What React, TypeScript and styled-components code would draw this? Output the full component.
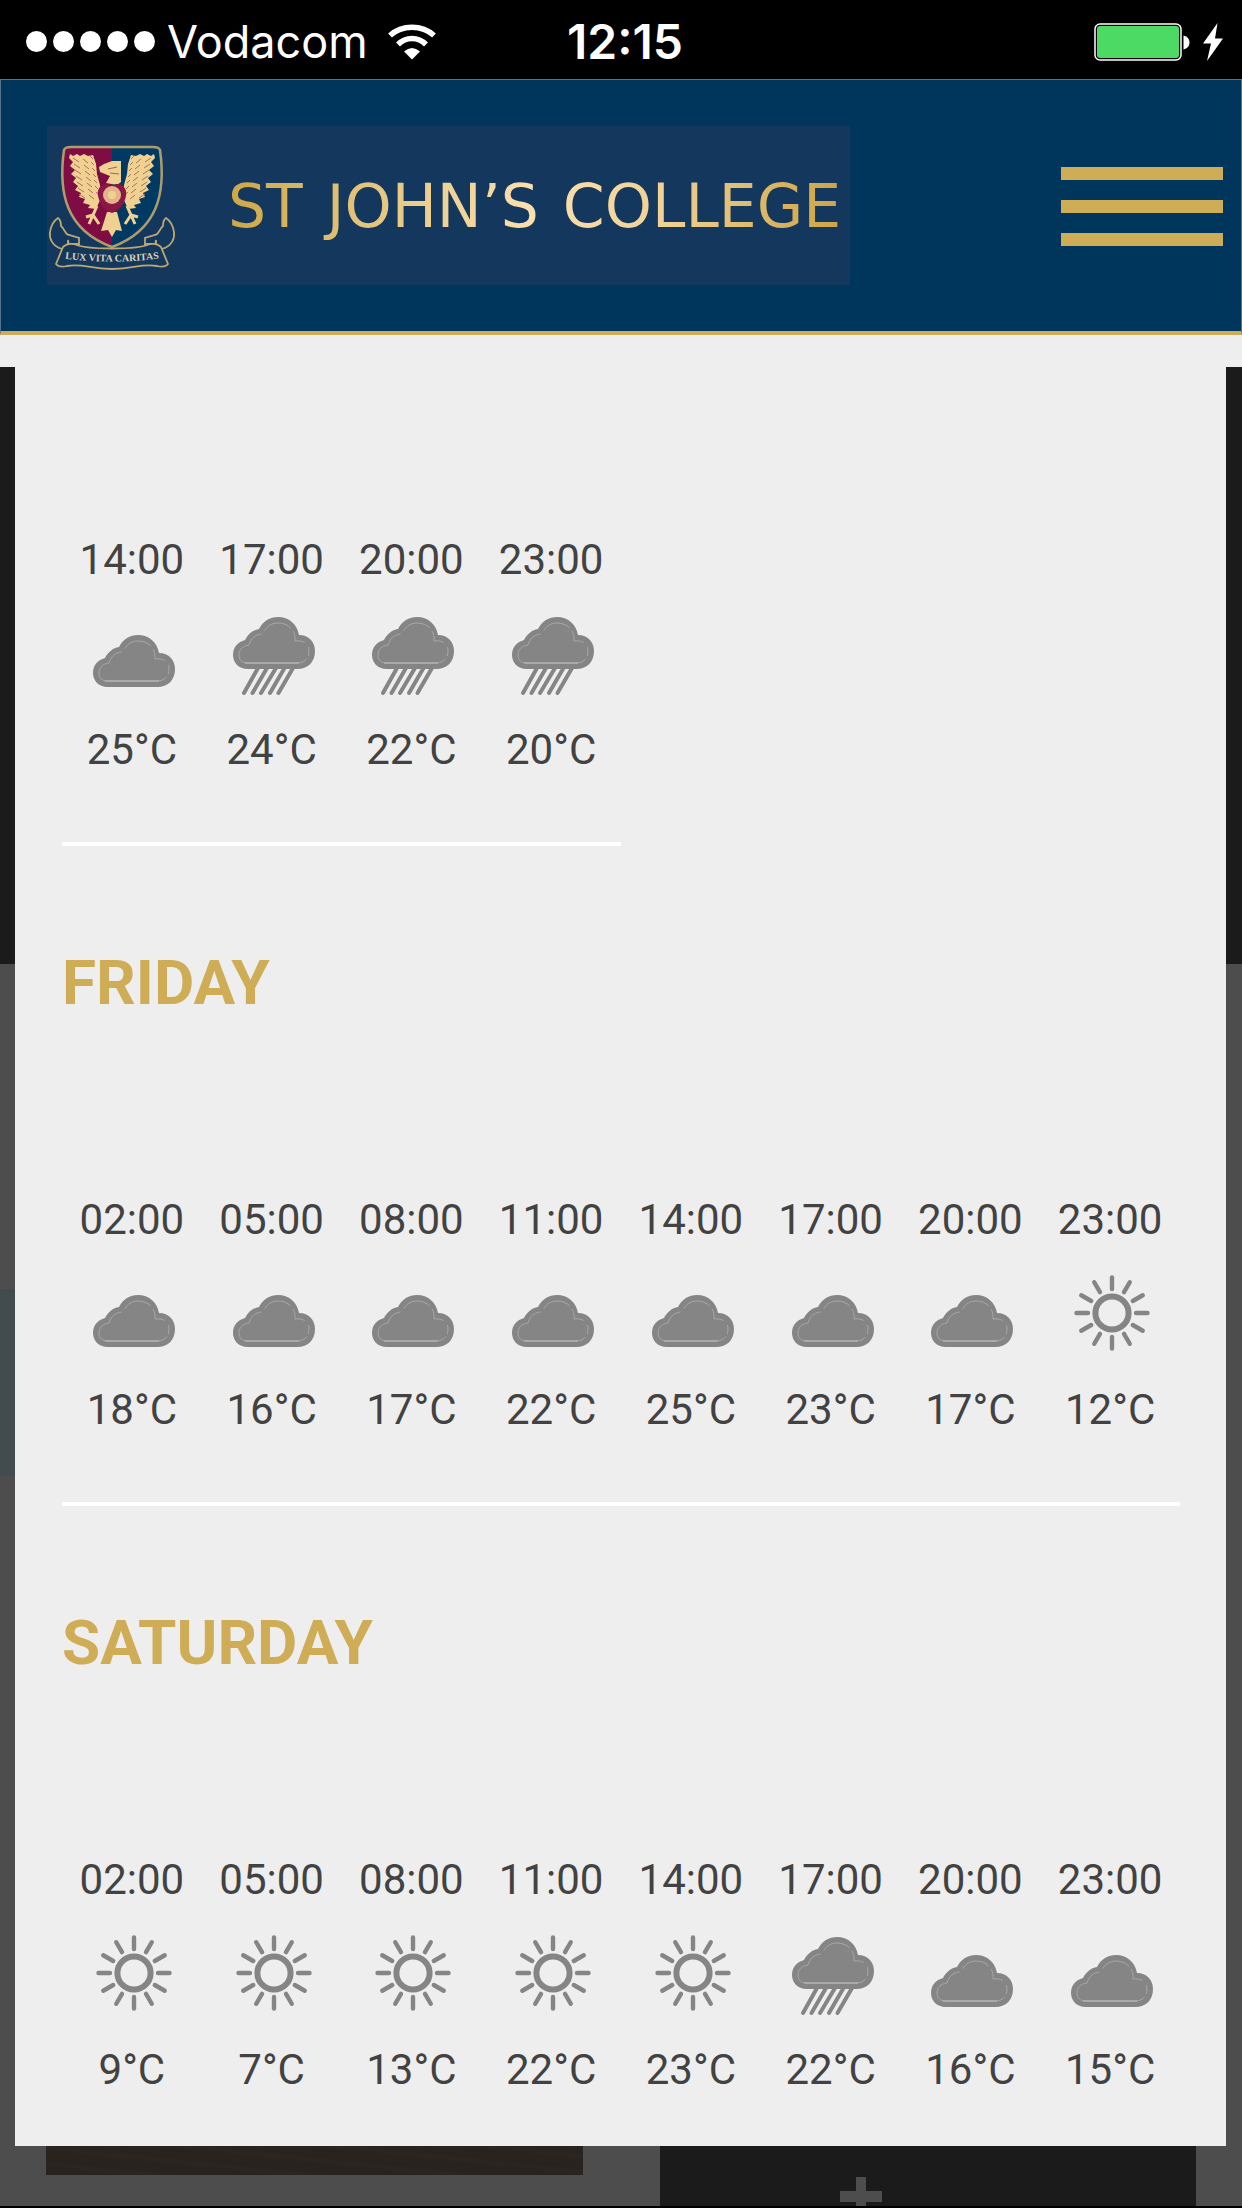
import React from "react";
import styled, { createGlobalStyle } from "styled-components";

const gold = "#cfad56";
const navy = "#00355c";
const paper = "#eeeeee";
const iconGrey = "#858585";

const GlobalStyle = createGlobalStyle`
  *, *::before, *::after { box-sizing: border-box; }
  html, body, #root { height: 100%; }
  body {
    margin: 0;
    background: ${paper};
    color: #424242;
    font-family: Roboto, "Liberation Sans", sans-serif;
  }
`;

const Screen = styled.div`
  display: flex;
  flex-direction: column;
  min-height: 100%;
`;

const StatusBar = styled.div`
  display: grid;
  grid-template-columns: 1fr auto 1fr;
  align-items: center;
  height: 79px;
  padding: 4px 18px 0 26px;
  background: #000;
  color: #fff;
  font-family: Inter, "Liberation Sans", sans-serif;
  font-size: 45px;
  line-height: 56px;
`;

const Carrier = styled.div`
  display: flex;
  align-items: center;
  gap: 12px;
`;

const Signal = styled.div`
  display: flex;
  gap: 6px;
`;

const Dot = styled.span`
  width: 21px;
  height: 21px;
  border-radius: 50%;
  background: #fff;
`;

const Network = styled.span`
  margin-right: 8px;
  font-weight: 400;
`;

const Clock = styled.time`
  font-size: 48px;
  font-weight: 600;
`;

const Power = styled.div`
  display: flex;
  justify-content: flex-end;
  align-items: center;
  gap: 12px;
`;

const Header = styled.header`
  display: flex;
  align-items: center;
  justify-content: space-between;
  height: 256px;
  padding: 0 18px 0 46px;
  background: ${navy};
  border: 1px solid #55748c;
  border-width: 1px 1px 0;
  border-bottom: 4px solid ${gold};
`;

const Brand = styled.a`
  display: flex;
  align-items: center;
  gap: 46px;
  width: 803px;
  height: 159px;
  overflow: hidden;
  background: #14385d;
  text-decoration: none;
`;

const Wordmark = styled.span`
  display: flex;
  gap: 24px;
  flex: none;
  background: linear-gradient(90deg, #cda745 0%, #e3c47c 22%, #fbe0b0 50%, #efd094 72%, #cda345 100%);
  background-clip: text;
  -webkit-background-clip: text;
  color: transparent;
  font-family: "DejaVu Sans", sans-serif;
  font-size: 60px;
  line-height: 72px;
`;

const MenuButton = styled.button`
  display: flex;
  flex-direction: column;
  gap: 20px;
  width: 162px;
  padding: 2px 0 0;
  border: 0;
  background: none;
`;

const MenuBar = styled.span`
  height: 13px;
  background: ${gold};
`;

const Stage = styled.main`
  display: grid;
  flex: 1;
  margin-top: 32px;
  background: #4d4d4d;
  border-bottom: 2px solid #000;
`;

const Backdrop = styled.div`
  grid-area: 1 / 1;
  display: flex;
  flex-direction: column;
`;

const Hero = styled.div`
  height: 597px;
  background: #1b1b1b;
`;

const Banner = styled.div`
  width: 50%;
  height: 187px;
  margin-top: 325px;
  background: #424b4e;
`;

const Tiles = styled.div`
  display: grid;
  grid-template-columns: 1fr 1fr;
  gap: 77px;
  margin-top: auto;
  padding: 0 46px;
`;

const PhotoTile = styled.div`
  height: 209px;
  background: repeating-linear-gradient(6deg, #29231f 0 7px, #2c2622 11px, #27221e 16px);
`;

const AddTile = styled.div`
  display: flex;
  align-items: flex-end;
  justify-content: center;
  height: 240px;
  padding-right: 134px;
  background: #1b1b1b;
`;

const Modal = styled.section`
  grid-area: 1 / 1;
  align-self: start;
  margin: 0 16px 60px 15px;
  padding: 168px 46px 51px 47px;
  background: ${paper};
`;

const Day = styled.section`
  & + & {
    padding-top: 101px;
  }
`;

const DayName = styled.h2`
  margin: 0 0 176px;
  color: ${gold};
  font-size: 62px;
  font-weight: 700;
  line-height: 72px;
`;

const Hours = styled.table<{ $columns: number }>`
  width: ${(p) => p.$columns * 12.5}%;
  border-collapse: collapse;
  table-layout: fixed;
  font-size: 42px;
  line-height: 50px;

  th,
  td {
    padding: 0;
    font-weight: 400;
    text-align: center;
  }
`;

const Rule = styled.hr<{ $columns: number }>`
  width: ${(p) => p.$columns * 12.5}%;
  height: 4px;
  margin: 67px 0 0;
  border: 0;
  background: #fff;
`;

const IconCell = styled.td`
  height: 140px;

  svg {
    display: block;
    margin: 0 auto;
  }
`;

type Sky = "cloud" | "rain" | "sun";
type Hour = [string, Sky, string];

const days: { name?: string; hours: Hour[] }[] = [
  {
    hours: [
      ["14:00", "cloud", "25°C"],
      ["17:00", "rain", "24°C"],
      ["20:00", "rain", "22°C"],
      ["23:00", "rain", "20°C"],
    ],
  },
  {
    name: "FRIDAY",
    hours: [
      ["02:00", "cloud", "18°C"],
      ["05:00", "cloud", "16°C"],
      ["08:00", "cloud", "17°C"],
      ["11:00", "cloud", "22°C"],
      ["14:00", "cloud", "25°C"],
      ["17:00", "cloud", "23°C"],
      ["20:00", "cloud", "17°C"],
      ["23:00", "sun", "12°C"],
    ],
  },
  {
    name: "SATURDAY",
    hours: [
      ["02:00", "sun", "9°C"],
      ["05:00", "sun", "7°C"],
      ["08:00", "sun", "13°C"],
      ["11:00", "sun", "22°C"],
      ["14:00", "sun", "23°C"],
      ["17:00", "rain", "22°C"],
      ["20:00", "cloud", "16°C"],
      ["23:00", "cloud", "15°C"],
    ],
  },
];

const CloudShape = () => (
  <g>
    <path
      d="M25 52C15 52 10 45 10 38C10 30 15 25 22 23C25 17 30 13 36 12C40 4 47 0 55 0C66 0 74 7 76 18C86 18 92 25 92 34C92 45 85 52 74 52Z"
      fill={iconGrey}
    />
    <path
      d="M25 46H74C82 46 86 41 86 34C86 27 81 23 72 24C73 14 66 6 55 6C48 6 43 10 40 17C33 17 28 21 26 28C19 29 16 33 16 38C16 43 19 46 25 46Z"
      fill="none"
      stroke="#a8a8a8"
      strokeWidth="1"
      strokeDasharray="60 3 9 6 20 4 30 5"
    />
    <path d="M22 46H76" stroke="#b0b0b0" strokeWidth="1.4" />
  </g>
);

const rays = Array.from({ length: 12 }, (_, i) => i * 30);

function SkyIcon({ sky }: { sky: Sky }) {
  return (
    <svg width="96" height="96" viewBox="0 0 96 96" role="img" aria-label={sky}>
      {sky === "cloud" && (
        <g transform="translate(-1 28)">
          <CloudShape />
        </g>
      )}
      {sky === "rain" && (
        <>
          <g transform="translate(-1 10)">
            <CloudShape />
          </g>
          <path
            d="M34 61L20 86M43 61L28.500 86M52 61L37 86M60.500 61L46 86M69 61L54.500 86"
            stroke={iconGrey}
            strokeWidth="4"
            strokeLinecap="round"
          />
        </>
      )}
      {sky === "sun" && (
        <g stroke={iconGrey} fill="none">
          <circle cx="50" cy="46" r="16.600" strokeWidth="6" />
          {rays.map((angle) => (
            <path key={angle} d="M50 22V10.500" strokeWidth="4.400" strokeLinecap="round" transform={`rotate(${angle} 50 46)`} />
          ))}
        </g>
      )}
    </svg>
  );
}

const WifiIcon = () => (
  <svg width="48" height="36" viewBox="0 0 48 36" aria-label="Wi-Fi" role="img">
    <path d="M2 10.500C14-.5 34-.5 46 10.500" transform="translate(0 1)" fill="none" stroke="#fff" strokeWidth="5.500" />
    <path d="M10 20.500C18 12.500 30 12.500 38 20.500" fill="none" stroke="#fff" strokeWidth="5.500" />
    <path d="M16 27.500Q24 20.500 32 27.500L24 35.500Z" fill="#fff" />
  </svg>
);

const BatteryIcon = () => (
  <svg width="96" height="38" viewBox="0 0 96 38" aria-label="Battery" role="img">
    <rect x="1" y="1" width="86" height="36" rx="5" fill="none" stroke="#fff" strokeWidth="1.500" />
    <rect x="3" y="3" width="82" height="32" rx="3" fill="#4cd964" />
    <path d="M89.500 12.500Q95.500 14 95.500 19.500T89.500 26.500Z" fill="#fff" />
  </svg>
);

const BoltIcon = () => (
  <svg width="22" height="38" viewBox="0 0 22 38" aria-label="Charging" role="img">
    <path d="M15.500 0L1 20.500H9L5 38L21 15.500H13Z" fill="#fff" />
  </svg>
);

const cream = "#f0d192";
const feathers = [0, 1, 2, 3, 4, 5, 6];

const Wing = () => (
  <g>
    <path
      d="M40 44L43 46L47 44L50 46L54 44L58 46L63 45L66 54L67 64L70 75L71 88L66 99L58 98L60 95L53 93L55 89L49 87L51 83L45 80L48 76L43 72L46 68L41 64L45 60L40 56L43 52L39 48Z"
      fill={cream}
    />
    {feathers.map((i) => (
      <path key={i} d={`M${43 + i} ${48 + i * 6}l6 4m4-3l5 4m2-7l3 3`} stroke="#a5755c" strokeWidth="1" fill="none" />
    ))}
  </g>
);

const Crest = () => (
  <svg width="135" height="159" viewBox="0 0 135 159" aria-hidden="true">
    <path d="M17 24Q18 21 24 21H106Q112 21 113 24C119 67 111 104 65 121C19 104 11 67 17 24Z" fill="#003a62" />
    <path d="M65 21H24Q18 21 17 24C11 67 19 104 65 121Z" fill="#7f0d43" />
    <path d="M17 24Q18 21 24 21H106Q112 21 113 24C119 67 111 104 65 121C19 104 11 67 17 24Z" fill="none" stroke="#ad9d6c" strokeWidth="2.500" />
    <g transform="translate(-17 -16)">
      <Wing />
    </g>
    <g transform="translate(147 -16) scale(-1 1)">
      <Wing />
    </g>
    <path d="M57 38L65 35H74V56L70 59L59 57L63 50L53 46L52 41Z" fill={cream} />
    <path d="M61 43L70 41M63 47L72 48" stroke="#9b6a55" strokeWidth="1.200" />
    <path d="M50 80L46 89L39 91M46 89L42 98M46 89L52 98M80 80L84 89L91 91M84 89L88 98M84 89L78 98" fill="none" stroke={cream} strokeWidth="3" />
    <path d="M60 86H70L75 105L69 104L65 111L61 104L54 105Z" fill={cream} />
    <path d="M65 60C71 55 81 60 79 70C77 79 72 85 65 87C58 85 53 79 51 70C49 60 59 55 65 60Z" fill="#8b1747" />
    <circle cx="65" cy="69" r="9" fill="#e4b488" />
    <circle cx="65" cy="69" r="4" fill={cream} />
    <g fill="#14385d" stroke="#b9a970" strokeWidth="1.800">
      <path d="M15 123C5 120 2 112 3 106C4 99 8 94 11 92C14 94 14 97 14 100C18 103 18 109 22 109L32 112V118H21V114Q23 119 15 123Z" />
      <path d="M115 123C125 120 128 112 127 106C126 99 122 94 119 92C116 94 116 97 116 100C112 103 112 109 108 109L98 112V118H109V114Q107 119 115 123Z" />
      <path d="M16 121Q20 117 27 118C40 124 90 124 103 118Q110 117 114 121L121 138Q118 142 110 140C94 137 88 143 65 143C42 143 36 137 20 140Q12 142 9 138Z" />
    </g>
    <path id="motto" d="M12 132Q65 139 118 132" fill="none" />
    <text fill="#d9d3b4" fontFamily="Liberation Serif, serif" fontWeight="700" fontSize="10">
      <textPath href="#motto" startOffset="50%" textAnchor="middle">
        LUX VITA CARITAS
      </textPath>
    </text>
  </svg>
);

const PlusIcon = () => (
  <svg width="42" height="31" viewBox="0 0 42 31" aria-hidden="true">
    <path d="M16 2H26V16H42V27H26V31H16V27H0V16H16Z" fill="#4d4d4d" />
  </svg>
);

export default function App() {
  return (
    <>
      <GlobalStyle />
      <Screen>
        <StatusBar>
          <Carrier>
            <Signal>
              {[1, 2, 3, 4, 5].map((n) => (
                <Dot key={n} />
              ))}
            </Signal>
            <Network>Vodacom</Network>
            <WifiIcon />
          </Carrier>
          <Clock>12:15</Clock>
          <Power>
            <BatteryIcon />
            <BoltIcon />
          </Power>
        </StatusBar>
        <Header>
          <Brand href="#">
            <Crest />
            <Wordmark>
              <span>ST</span>
              <span>JOHN’S</span>
              <span>COLLEGE</span>
            </Wordmark>
          </Brand>
          <MenuButton type="button" aria-label="Menu">
            <MenuBar />
            <MenuBar />
            <MenuBar />
          </MenuButton>
        </Header>
        <Stage>
          <Backdrop>
            <Hero />
            <Banner />
            <Tiles>
              <PhotoTile />
              <AddTile>
                <PlusIcon />
              </AddTile>
            </Tiles>
          </Backdrop>
          <Modal>
            {days.map(({ name, hours }, i) => (
              <Day key={i}>
                {name && <DayName>{name}</DayName>}
                <Hours $columns={hours.length}>
                  <thead>
                    <tr>
                      {hours.map(([time]) => (
                        <th key={time} scope="col">{time}</th>
                      ))}
                    </tr>
                  </thead>
                  <tbody>
                    <tr>
                      {hours.map(([time, sky]) => (
                        <IconCell key={time}>
                          <SkyIcon sky={sky} />
                        </IconCell>
                      ))}
                    </tr>
                    <tr>
                      {hours.map(([time, , temp]) => (
                        <td key={time}>{temp}</td>
                      ))}
                    </tr>
                  </tbody>
                </Hours>
                {i < days.length - 1 && <Rule $columns={hours.length} />}
              </Day>
            ))}
          </Modal>
        </Stage>
      </Screen>
    </>
  );
}
